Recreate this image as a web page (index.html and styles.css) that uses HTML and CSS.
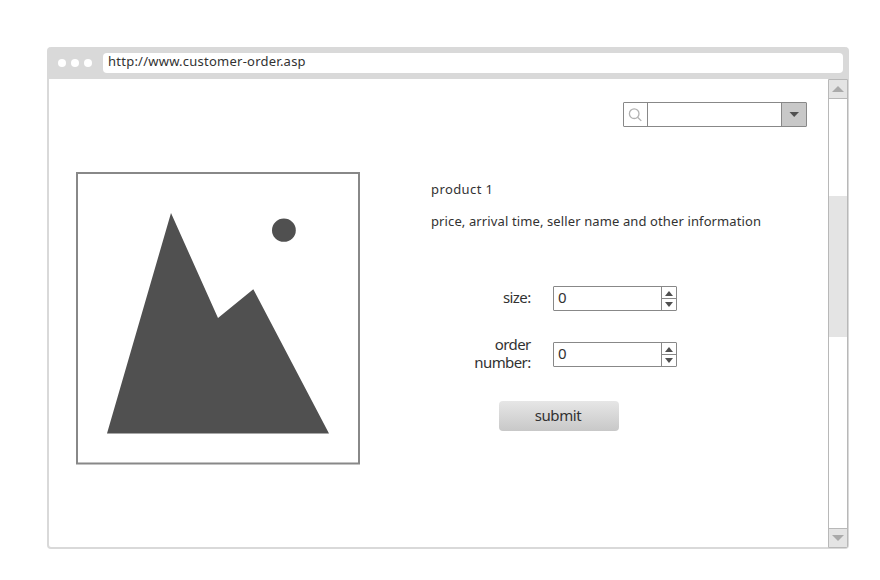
FILE: index.html
```html
<!DOCTYPE html>
<html lang="en">
<head>
<meta charset="utf-8">
<title>Customer order</title>
<link rel="stylesheet" href="styles.css">
</head>
<body>
<div class="browser">
  <header class="bar">
    <span class="dot"></span><span class="dot"></span><span class="dot"></span>
    <div class="address"><span class="url">http://www.customer-order.asp</span></div>
  </header>
  <div class="viewport">
    <main class="page">
      <div class="search">
        <span class="search-icon"><svg width="14" height="14" viewBox="0 0 14 14"><circle cx="6.2" cy="5.7" r="4.8"/><path d="M9.6 9.2L13.3 12.9"/></svg></span>
        <span class="search-field"></span>
        <span class="search-toggle"><svg width="10" height="5" viewBox="0 0 10 5"><path d="M0.5 0H10L5.2 5Z"/></svg></span>
      </div>
      <section class="product">
        <svg class="photo" width="284" height="293" viewBox="0 0 284 293">
          <path class="frame" d="M1 1H283V291.5H1Z"/>
          <path class="hill" d="M31 261.5L95 41L142 146L177.3 117.2L253 261.5Z"/>
          <ellipse class="hill" cx="207.9" cy="58.2" rx="11.9" ry="11.6"/>
        </svg>
        <div class="details">
          <p class="text name">product 1</p>
          <p class="text info">price, arrival time, seller name and other information</p>
          <form class="order">
            <div class="field">
              <span class="label">size:</span>
              <span class="spinner"><span class="value">0</span><span class="steps"><svg width="8" height="5" viewBox="0 0 8 5"><path d="M0 5L4 0L8 5Z"/></svg><svg width="8" height="5" viewBox="0 0 8 5"><path d="M0 0H8L4 5Z"/></svg></span></span>
            </div>
            <div class="field">
              <span class="label">order<br>number:</span>
              <span class="spinner"><span class="value">0</span><span class="steps"><svg width="8" height="5" viewBox="0 0 8 5"><path d="M0 5L4 0L8 5Z"/></svg><svg width="8" height="5" viewBox="0 0 8 5"><path d="M0 0H8L4 5Z"/></svg></span></span>
            </div>
            <button class="submit" type="button">submit</button>
          </form>
        </div>
      </section>
    </main>
    <aside class="scrollbar">
      <span class="arrow up"><svg width="12" height="6" viewBox="0 0 12 6"><path d="M0 6L6 0L12 6Z"/></svg></span>
      <span class="track"><span class="thumb"></span></span>
      <span class="arrow down"><svg width="12" height="6" viewBox="0 0 12 6"><path d="M0 0H12L6 6Z"/></svg></span>
    </aside>
  </div>
</div>
</body>
</html>
```
FILE: styles.css
```css
* { box-sizing: border-box; }
body {
  margin: 0;
  padding: 47px;
  background: #fff;
  color: #323232;
  font-family: "Noto Sans", sans-serif;
}
svg { display: block; flex: none; }
p { margin: 0; }
.browser {
  width: 802px;
  height: 502px;
  border: 2px solid #d9d9d9;
  border-top: 0;
  border-radius: 4px;
  background: #d9d9d9;
}
.bar {
  display: flex;
  align-items: center;
  height: 32px;
  padding: 0 4px 0 9px;
  gap: 5px;
}
.dot { width: 8px; height: 8px; border-radius: 50%; background: #fff; }
.address {
  flex: 1;
  height: 20px;
  margin-left: 6px;
  padding-left: 5px;
  border-radius: 4px;
  background: #fff;
  font-size: 13px;
  line-height: 17px;
}
.url { letter-spacing: 0.24px; }
.viewport {
  display: flex;
  height: 468px;
  background: #fff;
  border-radius: 0 0 2px 2px;
}
.page { flex: none; width: 779px; padding: 23px 21px 0 27px; }
.search {
  display: flex;
  width: 184px;
  height: 25px;
  margin-left: auto;
  border: 1px solid #888;
  border-radius: 1px;
}
.search-icon { width: 24px; padding: 5px 0 0 4px; border-right: 1px solid #888; }
.search-icon svg { fill: none; stroke: #b2b2b2; stroke-width: 1.3; }
.search-field { flex: 1; }
.search-toggle {
  width: 25px;
  padding: 9px 0 0 7px;
  border-left: 1px solid #888;
  background: #c8c8c8;
}
.search-toggle path { fill: #505050; }
.product { display: flex; gap: 71px; margin-top: 45px; }
.frame { fill: #fff; stroke: #888; stroke-width: 2; }
.hill { fill: #505050; }
.details { padding-top: 8px; }
.text { font-size: 13px; line-height: 18px; white-space: nowrap; }
.name { letter-spacing: 0.4px; }
.info { margin-top: 14px; letter-spacing: 0.115px; }
.order { width: 246px; padding-top: 50px; }
.field {
  display: flex;
  align-items: center;
  justify-content: flex-end;
  gap: 22px;
  height: 36px;
  margin-bottom: 20px;
}
.label {
  margin-right: 0.4px;
  padding-bottom: 2px;
  font-size: 15px;
  line-height: 18px;
  letter-spacing: -0.6px;
  text-align: right;
}
.spinner {
  display: flex;
  width: 124px;
  height: 25px;
  border: 1px solid #888;
  border-radius: 1px;
}
.value { flex: 1; padding-left: 4px; font-size: 15px; line-height: 20px; }
.steps {
  display: flex;
  flex-direction: column;
  justify-content: space-between;
  align-items: center;
  width: 15px;
  padding: 4px 0 3px;
  border-left: 1px solid #888;
  background: linear-gradient(#888, #888) 0 11px / 100% 1px no-repeat;
}
.steps path { fill: #505050; }
.submit {
  display: block;
  width: 120px;
  height: 30px;
  margin: 29px 0 0 68px;
  padding: 0 2px 2px 0;
  border: 0;
  border-radius: 4px;
  background: linear-gradient(#e6e6e6, #c8c8c8);
  color: #323232;
  font: 15px/28px "Noto Sans", sans-serif;
  letter-spacing: -0.4px;
}
.scrollbar {
  display: flex;
  flex-direction: column;
  flex: none;
  width: 20px;
  height: 469px;
  border: 1px solid #b8b8b8;
  border-radius: 0 0 2px 0;
  background: #fff;
}
.arrow { display: flex; align-items: center; justify-content: center; height: 19px; background: #e4e4e4; }
.arrow path { fill: #aaa; }
.up { border-bottom: 1px solid #b8b8b8; }
.down { border-top: 1px solid #b8b8b8; }
.track { flex: 1; padding-top: 97px; }
.thumb { display: block; height: 141px; background: #e4e4e4; }
```
